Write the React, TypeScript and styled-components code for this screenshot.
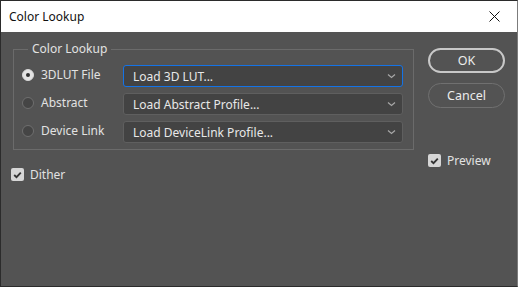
import { FC } from "react";
import styled, { createGlobalStyle } from "styled-components";

const Global = createGlobalStyle`
	html, body {
		margin:0;
		padding:0;
		background:#535353;
	}
	body {
		font-family:"Noto Sans", "Liberation Sans", sans-serif;
		font-size:12px;
	}
`;

const Window = styled.div`
	width:518px;
	height:287px;
	box-sizing:border-box;
	border:1px solid #2b2b2b;
	border-right-color:#7c7c7c;
	display:flex;
	flex-direction:column;
	background:#535353;
`;

const TitleBar = styled.div`
	height:31px;
	background:#fff;
	display:flex;
	align-items:center;
	justify-content:space-between;
	padding:0 0 0 8px;
	color:#111;
	font-size:12px;
`;

const CloseBtn = styled.div`
	width:46px;
	height:31px;
	display:flex;
	align-items:center;
	justify-content:center;
`;

const Body = styled.div`
	flex:1;
	display:flex;
	padding:9px 12px 0 12px;
	gap:14px;
	color:#e2e2e2;
`;

const LeftCol = styled.div`
	width:401px;
	display:flex;
	flex-direction:column;
`;

const RightCol = styled.div`
	width:77px;
	display:flex;
	flex-direction:column;
	padding-top:7px;
`;

const Group = styled.fieldset`
	margin:0;
	padding:8px 10px 6px 8px;
	border:1px solid #6b6b6b;
	display:flex;
	flex-direction:column;
	gap:6px;
	min-width:0;
`;

const Legend = styled.legend`
	margin-left:6px;
	padding:0 4px;
	line-height:16px;
	color:#e2e2e2;
`;

const Row = styled.div`
	display:flex;
	align-items:center;
	height:22px;
`;

const RadioLabel = styled.label`
	width:101px;
	display:flex;
	align-items:center;
	gap:7px;
	margin-top:-3px;
`;

const RadioDot = styled.span<{ $on?: boolean }>`
	width:12px;
	height:12px;
	box-sizing:border-box;
	border-radius:50%;
	border:1px solid ${p => p.$on ? "#d8d8d8" : "#6f6f6f"};
	background:${p => p.$on ? "#e2e2e2" : "#454545"};
	display:flex;
	align-items:center;
	justify-content:center;

	&::after {
		content:"";
		width:4px;
		height:4px;
		border-radius:50%;
		background:#2e2e2e;
		display:${p => p.$on ? "block" : "none"};
	}
`;

const Select = styled.div<{ $focus?: boolean }>`
	flex:1;
	height:22px;
	box-sizing:border-box;
	border:1px solid ${p => p.$focus ? "#1473e6" : "#5f5f5f"};
	border-radius:3px;
	background:#434343;
	display:flex;
	align-items:center;
	justify-content:space-between;
	padding:0 6px 0 9px;
	color:#e8e8e8;
`;

const Chevron = () => (
	<svg width="9" height="6" viewBox="0 0 9 6">
		<path d="M1 1.5 L4.5 4.5 L8 1.5" fill="none" stroke="#a8a8a8" strokeWidth="1.2" />
	</svg>
);

const PillButton = styled.div<{ $primary?: boolean }>`
	height:25px;
	box-sizing:border-box;
	border-radius:13px;
	border:${p => p.$primary ? "2px solid #c8c8c8" : "1px solid #707070"};
	display:flex;
	align-items:center;
	justify-content:center;
	color:#ececec;
	font-size:12.5px;
	margin-bottom:10px;
`;

const Check = styled.label`
	display:flex;
	align-items:center;
	gap:6px;
	color:#e2e2e2;
`;

const Box = styled.span`
	width:13px;
	height:13px;
	border-radius:2px;
	background:#d6d6d6;
	display:flex;
	align-items:center;
	justify-content:center;
`;

const Tick = () => (
	<svg width="9" height="8" viewBox="0 0 9 8">
		<path d="M1.2 4 L3.5 6.2 L7.8 1.6" fill="none" stroke="#333" strokeWidth="1.8" />
	</svg>
);

const DitherRow = styled(Check)`
	margin-top:16px;
	margin-left:-2px;
`;

const PreviewRow = styled(Check)`
	margin-top:34px;
`;

const options = [
	{ label: "3DLUT File", value: "Load 3D LUT...", on: true },
	{ label: "Abstract", value: "Load Abstract Profile..." },
	{ label: "Device Link", value: "Load DeviceLink Profile..." },
];

const App: FC = () => {
	return (
		<>
			<Global />
			<Window>
				<TitleBar>
					<span>Color Lookup</span>
					<CloseBtn>
						<svg width="11" height="11" viewBox="0 0 11 11">
							<path d="M0.5 0.5 L10.5 10.5 M10.5 0.5 L0.5 10.5" stroke="#111" strokeWidth="1" />
						</svg>
					</CloseBtn>
				</TitleBar>
				<Body>
					<LeftCol>
						<Group>
							<Legend>Color Lookup</Legend>
							{options.map(o => (
								<Row key={o.label}>
									<RadioLabel>
										<RadioDot $on={o.on} />
										{o.label}
									</RadioLabel>
									<Select $focus={o.on}>
										{o.value}
										<Chevron />
									</Select>
								</Row>
							))}
						</Group>
						<DitherRow>
							<Box><Tick /></Box>
							Dither
						</DitherRow>
					</LeftCol>
					<RightCol>
						<PillButton $primary>OK</PillButton>
						<PillButton>Cancel</PillButton>
						<PreviewRow>
							<Box><Tick /></Box>
							Preview
						</PreviewRow>
					</RightCol>
				</Body>
			</Window>
		</>
	);
};

export default App;
